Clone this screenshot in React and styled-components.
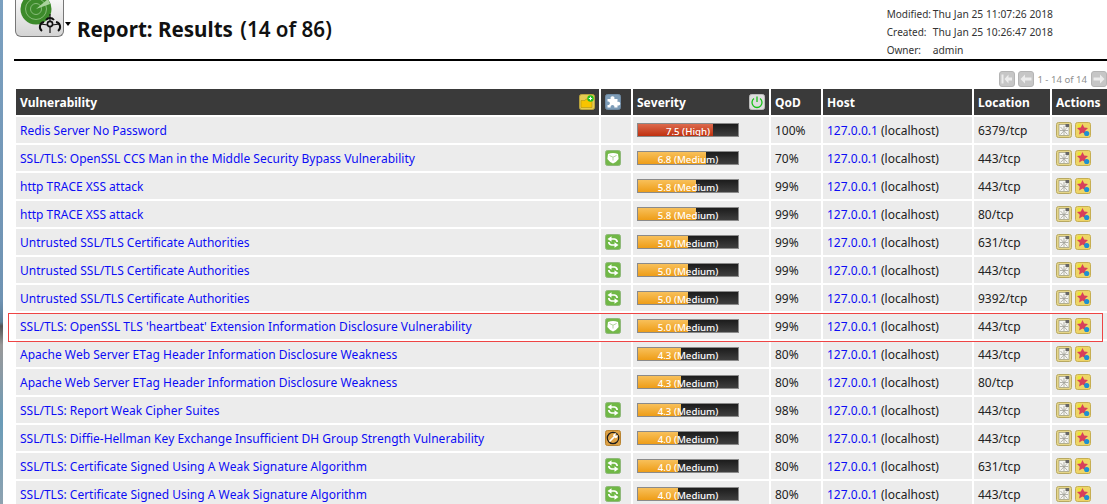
import React from 'react';
import styled, { createGlobalStyle } from 'styled-components';

const Global = createGlobalStyle`
  html, body { margin: 0; padding: 0; background: #fff; overflow: hidden; }
  body {
    font-family: "Noto Sans", "Open Sans", sans-serif;
    font-size: 12px;
    color: #222;
    font-kerning: none;
  }
`;

const Page = styled.div`
  width: 1107px;
  height: 504px;
  overflow: hidden;
  display: flex;
  background: #fff;
`;

const Edge = styled.div`
  width: 3px;
  height: 504px;
  flex: none;
  background: linear-gradient(#7ba0c0 0, #6f93b3 300px, #5d7f96 322px, #555 326px, #707070 334px, #999 345px, #8a9aa5 375px, #6a9cb8 420px, #7a9fb5 460px, #8ea2b0 504px);
`;

const Content = styled.div`
  flex: 1;
  min-width: 0;
  padding-left: 11px;
  position: relative;
`;

const Header = styled.header`
  height: 59px;
  border-bottom: 2px solid #000;
  display: flex;
  justify-content: space-between;
`;

const TitleWrap = styled.div`
  display: flex;
  align-items: flex-start;
`;

const LogoTile = styled.div`
  width: 47px;
  height: 36px;
  margin-left: 1px;
  border: 1px solid #777;
  border-top: 0;
  border-radius: 0 0 6px 6px;
  background: linear-gradient(#f6f6f6, #d4d4d4);
  overflow: hidden;
  flex: none;
`;

const Caret = styled.div`
  width: 0;
  height: 0;
  margin: 22px 0 0 1px;
  border-left: 3.5px solid transparent;
  border-right: 3.5px solid transparent;
  border-top: 4px solid #000;
`;

const Title = styled.h1`
  margin: 15px 0 0 6px;
  font-size: 20.6px;
  line-height: 28px;
  font-weight: 700;
  color: #111;
  span { font-weight: 600; margin-left: 2px; }
`;

const Meta = styled.div`
  display: grid;
  grid-template-columns: 46px auto;
  grid-auto-rows: 18px;
  margin: 5px 54px 0 0;
  font-size: 10.3px;
  line-height: 18px;
  color: #333;
`;

const MetaLabel = styled.span`
  font-size: 10px;
`;

const Pager = styled.div`
  height: 28px;
  display: flex;
  justify-content: flex-end;
  align-items: center;
  gap: 3px;
  padding-top: 8px;
  box-sizing: border-box;
  font-size: 9.6px;
  color: #8f8f8f;
`;

const PagerLabel = styled.span`
  margin-right: 1px;
`;

const PagerButton = styled.div`
  width: 16px;
  height: 16px;
  border-radius: 3px;
  background: #c6c6c6;
  border: 1px solid #b4b4b4;
  box-sizing: border-box;
  display: flex;
  align-items: center;
  justify-content: center;
`;

const Table = styled.div`
  margin-left: 2px;
  display: grid;
  grid-template-columns: 583px 30px 136px 50px 149px 76px 55px;
  grid-auto-rows: 26px;
  gap: 2px;
  width: 1099px;
`;

const HeadCell = styled.div`
  background: #3a3a3a;
  color: #fff;
  font-weight: 700;
  font-size: 12px;
  display: flex;
  align-items: center;
  justify-content: space-between;
  padding: 0 4px;
  min-width: 0;
`;

const Cell = styled.div`
  background: #ececec;
  font-size: 12px;
  color: #222;
  display: flex;
  align-items: center;
  padding: 0 4px;
  white-space: nowrap;
  min-width: 0;
`;

const Link = styled.a`
  color: #0c0cf5;
  text-decoration: none;
`;

const Bar = styled.div`
  position: relative;
  width: 102px;
  height: 14px;
  box-sizing: border-box;
  border: 1px solid #8a8a8a;
  background: linear-gradient(#1c1c1c, #3e3e3e);
  overflow: hidden;
`;

const BarFill = styled.div`
  height: 100%;
  background: ${p => p.$high ? 'linear-gradient(#dc6a4e, #c0300e)' : 'linear-gradient(#f8c05a, #ee9d17)'};
`;

const BarText = styled.div`
  position: absolute;
  inset: 0;
  text-align: center;
  color: #fff;
  font-size: 9.7px;
  line-height: 15px;
  font-weight: 500;
`;

const ActionPair = styled.div`
  display: flex;
  gap: 3px;
`;

const Selected = styled.div`
  position: absolute;
  left: 5px;
  top: 313px;
  width: 1093px;
  height: 27px;
  border: 1px solid #ee4444;
  pointer-events: none;
`;

const Tile = ({ bg, edge = '#00000022', children }) => (
  <svg width="16" height="16" viewBox="0 0 16 16">
    <rect x="0.5" y="0.5" width="15" height="15" rx="2" fill={bg} stroke={edge} />
    {children}
  </svg>
);

const PagerArrow = ({ dir, bar }) => (
  <svg width="14" height="14" viewBox="0 0 14 14">
    <g fill="#ececec" transform={dir === 'right' ? 'matrix(-1 0 0 1 14 0)' : undefined}>
      {bar && <rect x="1.5" y="2.5" width="2" height="9" />}
      <path d={bar ? 'M4.5 7L8.5 2.5V5.5H12V8.5H8.5V11.5z' : 'M1.5 7L6 2.5V5.5H12.5V8.5H6V11.5z'} />
    </g>
  </svg>
);

const NoteIcon = () => (
  <Tile bg="#e6cc52" edge="#b8a23c">
    <path d="M2 6.5h4l1-1.5h6v8.5H2z" fill="#f8c400" stroke="#a88a10" strokeWidth=".5" />
    <circle cx="11.5" cy="4.5" r="3.2" fill="#20c020" />
    <path d="M9.8 4.5h3.4M11.5 2.8v3.4" stroke="#fff" strokeWidth="1.1" />
  </Tile>
);

const PluginIcon = () => (
  <Tile bg="#7e9db8" edge="#6f8aa3">
    <path d="M2.5 5h3.2a2 2 0 1 1 3.6 0h3.2v3a1.9 1.9 0 1 1 0 3.4v2.1H9.3a1.9 1.9 0 1 0-3.6 0H2.5v-2.6a1.8 1.8 0 1 0 0-3.4z" fill="#fff" />
  </Tile>
);

const PowerIcon = () => (
  <Tile bg="#dedede" edge="#bcbcbc">
    <path d="M5 4.5a5 5 0 1 0 6 0" fill="none" stroke="#18c018" strokeWidth="1.3" />
    <path d="M8 2.5v5.5" stroke="#18c018" strokeWidth="1.3" />
  </Tile>
);

const SolutionIcon = ({ type }) => {
  if (type === 'mitigate') {
    return (
      <Tile bg="#dda044" edge="#b98432">
        <circle cx="8" cy="8" r="5.7" fill="none" stroke="#1c1c1c" strokeWidth="1.2" />
        <path d="M4.5 11.5L9.5 6.5" stroke="#fff" strokeWidth="1.7" />
        <path d="M8 5.5a2.6 2.6 0 0 1 3.5-2l-1.5 1.6 1 1 1.6-1.4a2.6 2.6 0 0 1-2 3.5z" fill="#fff" />
      </Tile>
    );
  }
  if (type === 'fix') {
    return (
      <Tile bg="#70b846" edge="#8fb87a">
        <path d="M5.5 5H9.5Q12 5.5 12.2 8" fill="none" stroke="#fff" strokeWidth="1.7" />
        <path d="M10.5 11H6.5Q4 10.5 3.8 8" fill="none" stroke="#fff" strokeWidth="1.7" />
        <path d="M2.5 5L6.5 2.2V7.8zM13.5 11L9.5 8.2V13.8z" fill="#fff" />
      </Tile>
    );
  }
  return (
    <Tile bg="#74b84a" edge="#8fb87a">
      <path d="M3 4Q8 2 13 4L13.6 9Q11.5 12 8 13.6 4.5 12 2.4 9z" fill="#fff" />
      <path d="M4.5 5.5L8 7.2l3.5-1.7M8 7.2V10.5" fill="none" stroke="#a9cf92" strokeWidth=".9" />
    </Tile>
  );
};

const ReportIcon = () => (
  <Tile bg="#e6d68a" edge="#b7a862">
    <rect x="3" y="2.5" width="10" height="11" fill="#f6f6f2" stroke="#8a8a70" strokeWidth=".6" />
    <path d="M4.5 5l7 7.5M11.5 5l-7 7.5M8 4v9M4 8.5h8" stroke="#a2a29a" strokeWidth=".8" />
    <rect x="9.5" y="2" width="3.5" height="3" fill="#666" />
  </Tile>
);

const OverrideIcon = () => (
  <Tile bg="#eed566" edge="#c6ae52">
    <circle cx="4.5" cy="4" r="2" fill="#e8ea30" />
    <path d="M7.5 2l1.7 3.6 3.8.5-2.8 2.6.7 3.8-3.4-1.9-3.4 1.9.7-3.8L2 6.1l3.8-.5z" fill="#d8405a" />
    <circle cx="11.7" cy="11.5" r="2.6" fill="#1f8fd0" />
  </Tile>
);

const Logo = () => (
  <svg width="47" height="36" viewBox="0 0 47 36">
    <circle cx="20" cy="9" r="15.5" fill="#3c8a2a" />
    <circle cx="20" cy="9" r="10.5" fill="none" stroke="#86bb78" strokeWidth="1" />
    <circle cx="20" cy="9" r="5.5" fill="none" stroke="#86bb78" strokeWidth="1" />
    <path d="M20 9L32 -1 34 4z" fill="#a9d39d" />
    <g fill="none" stroke="#111">
      <path d="M30 20a5 5 0 0 1 8 0" strokeWidth="2" />
      <path d="M26 31a5 5 0 0 1 2-9" strokeWidth="2" />
      <path d="M42 31a5 5 0 0 0-2-9" strokeWidth="2" />
      <circle cx="34" cy="24" r="2.6" strokeWidth="1.6" />
      <path d="M34 14v7M34 27v6M24 24l8 1M44 24l-8 1" strokeWidth="1.2" />
    </g>
  </svg>
);

const rows = [
  ['Redis Server No Password', null, 7.5, 'High', '100%', '6379/tcp'],
  ['SSL/TLS: OpenSSL CCS Man in the Middle Security Bypass Vulnerability', 'vendor', 6.8, 'Medium', '70%', '443/tcp'],
  ['http TRACE XSS attack', null, 5.8, 'Medium', '99%', '443/tcp'],
  ['http TRACE XSS attack', null, 5.8, 'Medium', '99%', '80/tcp'],
  ['Untrusted SSL/TLS Certificate Authorities', 'fix', 5.0, 'Medium', '99%', '631/tcp'],
  ['Untrusted SSL/TLS Certificate Authorities', 'fix', 5.0, 'Medium', '99%', '443/tcp'],
  ['Untrusted SSL/TLS Certificate Authorities', 'fix', 5.0, 'Medium', '99%', '9392/tcp'],
  ["SSL/TLS: OpenSSL TLS 'heartbeat' Extension Information Disclosure Vulnerability", 'vendor', 5.0, 'Medium', '99%', '443/tcp'],
  ['Apache Web Server ETag Header Information Disclosure Weakness', null, 4.3, 'Medium', '80%', '443/tcp'],
  ['Apache Web Server ETag Header Information Disclosure Weakness', null, 4.3, 'Medium', '80%', '80/tcp'],
  ['SSL/TLS: Report Weak Cipher Suites', 'fix', 4.3, 'Medium', '98%', '443/tcp'],
  ['SSL/TLS: Diffie-Hellman Key Exchange Insufficient DH Group Strength Vulnerability', 'mitigate', 4.0, 'Medium', '80%', '443/tcp'],
  ['SSL/TLS: Certificate Signed Using A Weak Signature Algorithm', 'fix', 4.0, 'Medium', '80%', '631/tcp'],
  ['SSL/TLS: Certificate Signed Using A Weak Signature Algorithm', 'fix', 4.0, 'Medium', '80%', '443/tcp'],
];

const App = () => (
  <Page>
    <Global />
    <Edge />
    <Content>
      <Header>
        <TitleWrap>
          <LogoTile><Logo /></LogoTile>
          <Caret />
          <Title>Report: Results <span>(14 of 86)</span></Title>
        </TitleWrap>
        <Meta>
          <MetaLabel>Modified:</MetaLabel><span>Thu Jan 25 11:07:26 2018</span>
          <MetaLabel>Created:</MetaLabel><span>Thu Jan 25 10:26:47 2018</span>
          <MetaLabel>Owner:</MetaLabel><span>admin</span>
        </Meta>
      </Header>
      <Pager>
        <PagerButton><PagerArrow bar /></PagerButton>
        <PagerButton><PagerArrow /></PagerButton>
        <PagerLabel>1 - 14 of 14</PagerLabel>
        <PagerButton><PagerArrow dir="right" /></PagerButton>
      </Pager>
      <Table>
        <HeadCell>Vulnerability <NoteIcon /></HeadCell>
        <HeadCell><PluginIcon /></HeadCell>
        <HeadCell>Severity <PowerIcon /></HeadCell>
        <HeadCell>QoD</HeadCell>
        <HeadCell>Host</HeadCell>
        <HeadCell>Location</HeadCell>
        <HeadCell>Actions</HeadCell>
        {rows.map(([name, sol, sev, level, qod, loc], i) => (
          <React.Fragment key={i}>
            <Cell><Link href="#">{name}</Link></Cell>
            <Cell>{sol && <SolutionIcon type={sol} />}</Cell>
            <Cell>
              <Bar>
                <BarFill $high={level === 'High'} style={{ width: `${sev * 10}%` }} />
                <BarText>{sev.toFixed(1)} ({level})</BarText>
              </Bar>
            </Cell>
            <Cell>{qod}</Cell>
            <Cell><Link href="#">127.0.0.1</Link>&nbsp;(localhost)</Cell>
            <Cell>{loc}</Cell>
            <Cell><ActionPair><ReportIcon /><OverrideIcon /></ActionPair></Cell>
          </React.Fragment>
        ))}
      </Table>
      <Selected />
    </Content>
  </Page>
);

export default App;
